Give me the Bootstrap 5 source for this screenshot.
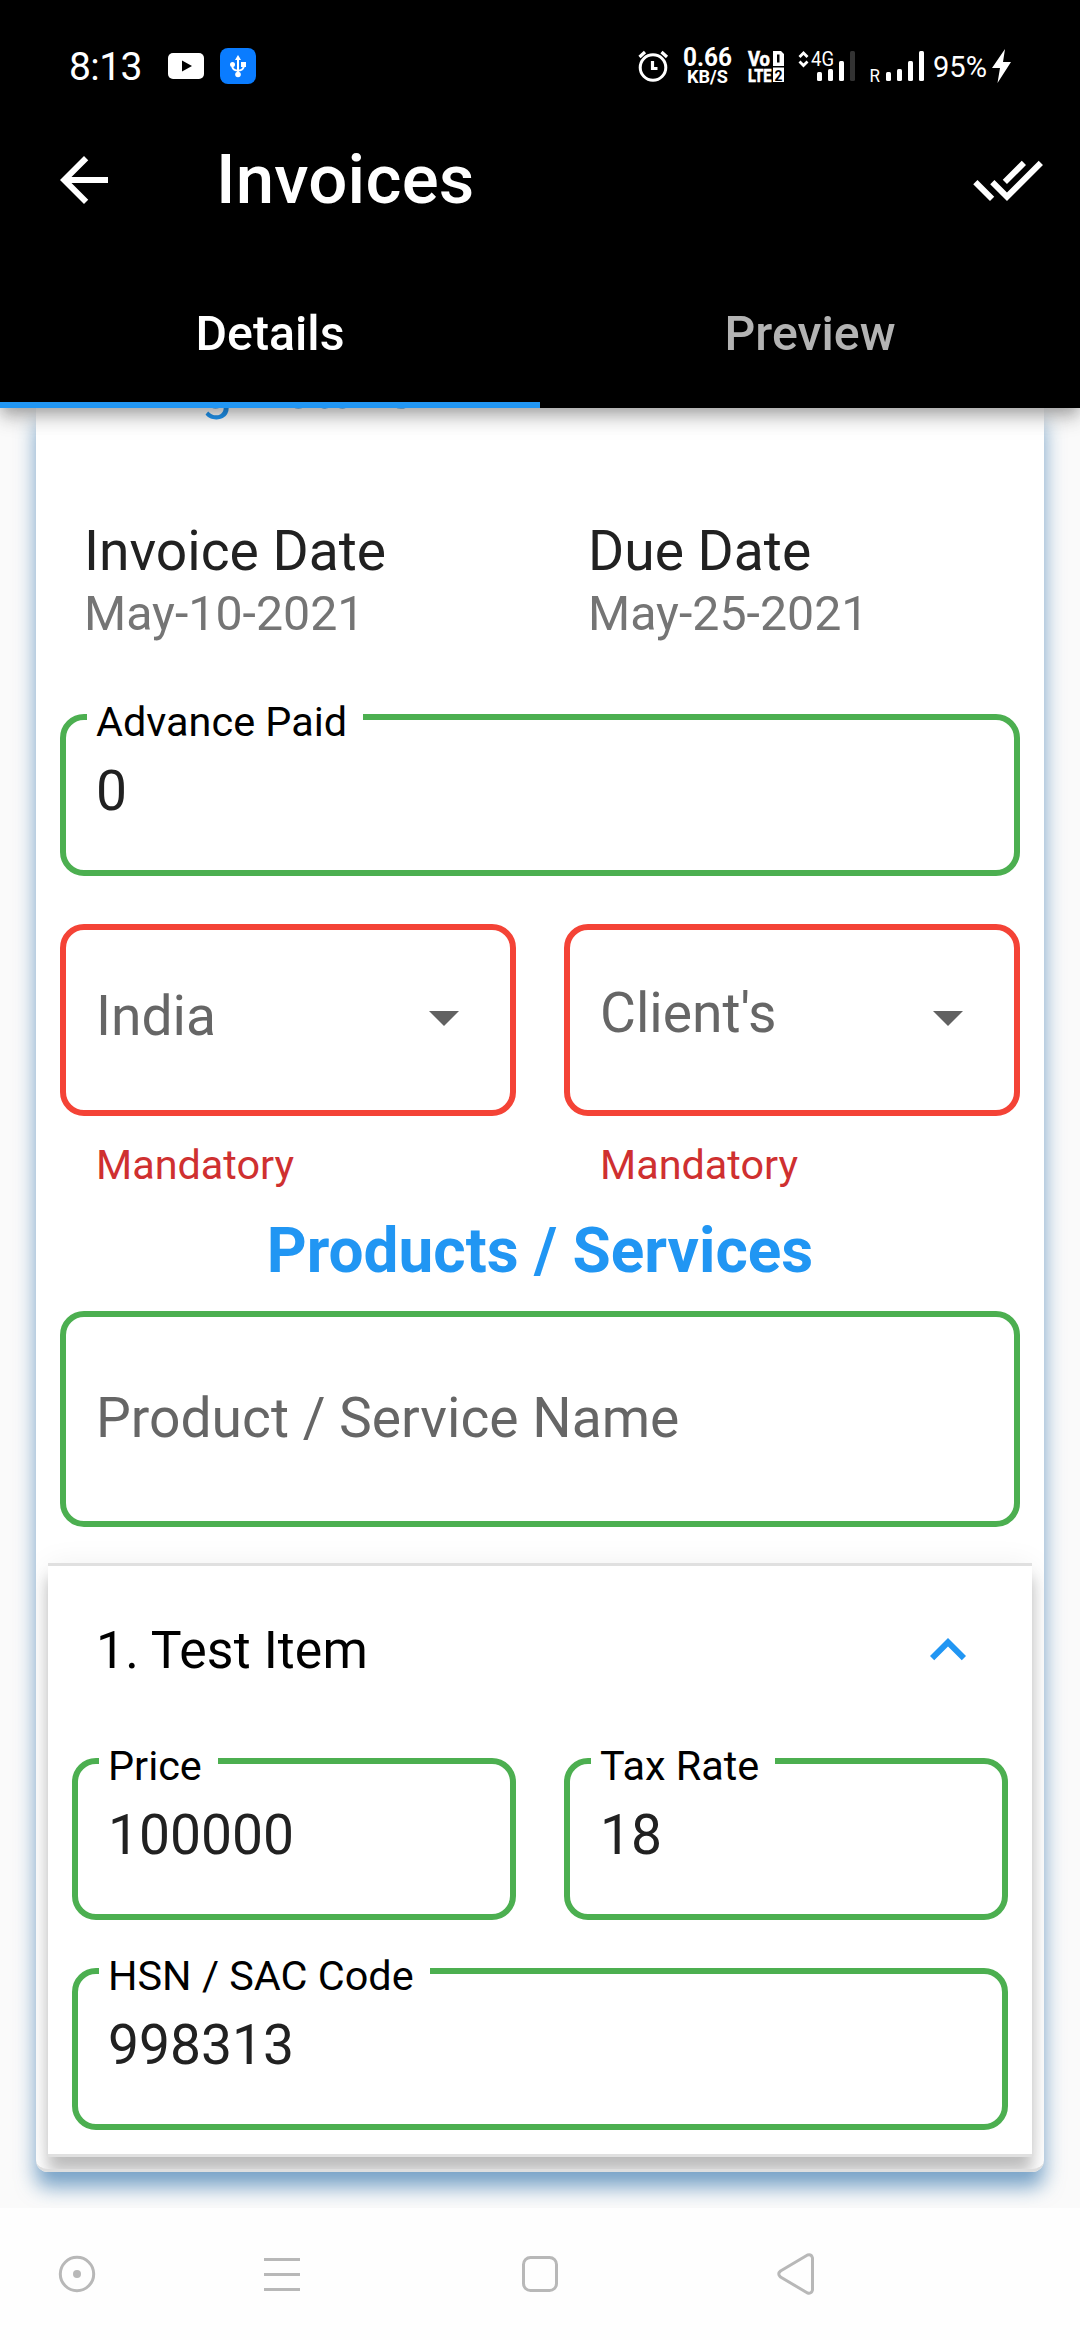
<!DOCTYPE html>
<html lang="en">
<head>
<meta charset="utf-8">
<title>Invoices</title>
<link href="https://cdn.jsdelivr.net/npm/bootstrap@5.3.0/dist/css/bootstrap.min.css" rel="stylesheet">
<style>
  body { width: 1080px; height: 2340px; overflow: hidden; background: #fafafa; font-family: Roboto, "Liberation Sans", sans-serif; color: #212121; }
  svg { display: block; flex: none; overflow: visible; }
  .status-strip { height: 96px; padding: 0 68px 0 69px; }
  .clock { font-size: 39px; line-height: 46px; letter-spacing: -.6px; width: 99px; padding-top: 2px; }
  .app-header { height: 168px; padding: 0 36px 0 48px; }
  .app-title { font-size: 69px; line-height: 84px; font-weight: 500; margin-left: 96px; letter-spacing: .2px; }
  .app-tabs .nav-link { height: 144px; border: 0; border-bottom: 6px solid transparent; border-radius: 0; font-size: 48.3px; font-weight: 500; color: #b3b3b3; padding: 0; line-height: 139px; }
  .app-tabs .nav-link.active { color: #fff; border-color: #2196f3; }
  .top-area { box-shadow: 0 6px 12px -3px rgba(0,0,0,.2), 0 12px 15px rgba(0,0,0,.14), 0 3px 30px rgba(0,0,0,.12); z-index: 2; }
  .scroll-area { height: 1800px; padding: 0 36px; }
  .sheet { height: 1764px; border: 0; border-radius: 0 0 12px 12px; box-shadow: 0 15px 20px rgba(20,95,160,.57); }
  .sheet-inner { border-radius: 0 0 12px 12px; overflow: hidden; height: 100%; border-bottom: 3px solid #dedede; }
  .blue-head { color: #2196f3; }
  .first-head { font-size: 55.2px; line-height: 66px; font-weight: 400; margin: -52px 0 96px 47px; }
  .dates { padding: 0 48px; }
  .date-name { font-size: 55.2px; line-height: 66px; }
  .date-value { font-size: 48.3px; line-height: 57px; padding-top: 1px; color: #757575; }
  .date-cell { width: 504px; }
  .outlined { border: 6px solid #4caf50; border-radius: 24px; height: 162px; padding: 38px 30px 0; font-size: 55.2px; line-height: 66px; background: #fff; }
  .outlined.bad { border-color: #f44336; height: 192px; padding: 0 30px 6px; color: #666; }
  .outlined.tall { height: 216px; padding-top: 68px; color: #666; }
  .float-label { top: -22px; left: 21px; padding: 0 16px 0 9px; background: #fff; color: #000; font-size: 41.4px; line-height: 48px; white-space: nowrap; }
  .advance { margin: 72px 24px 48px; }
  .pickers { margin: 0 24px; gap: 48px; }
  .error-text { color: #cf3030; font-size: 41.4px; line-height: 48px; padding: 25px 0 0 36px; }
  .second-head { font-size: 62.1px; line-height: 74px; font-weight: 700; margin: 25px 0 23px; }
  .item-panel { margin: 36px 12px 0; height: 594px; background: #fff; border-top: 3px solid #e0e0e0; border-bottom: 3px solid #e0e0e0; box-shadow: 0 15px 14px rgba(0,0,0,.23), 0 3px 30px rgba(0,0,0,.07); }
  .item-head { height: 144px; margin-top: 12px; padding: 0 48px; font-size: 51.75px; line-height: 62px; color: #000; letter-spacing: .1px; }
  .item-head span { padding-top: 2px; }
  .country { padding-bottom: 2px; }
  .item-body { padding: 36px 24px 0; gap: 48px; }
  .sys-nav { height: 132px; background: #fefefe; padding-left: 58px; }
</style>
</head>
<body class="d-flex flex-column">
<header class="top-area bg-black text-white position-relative">
  <div class="status-strip d-flex align-items-start">
    <div class="d-flex align-items-center" style="height:132px">
      <div class="clock">8:13</div>
      <svg width="36" height="26" viewBox="0 0 36 26"><rect width="36" height="26" rx="5" fill="#fff"/><path d="M14 7.5l10 5.5-10 5.5z" fill="#000"/></svg>
      <svg class="ms-3" width="36" height="36" viewBox="0 0 36 36"><rect width="36" height="36" rx="8" fill="#0a7cff"/><g fill="none" stroke="#fff" stroke-width="2"><path d="M18 10v17M12.500 17v2.500q1 3 5.500 3t5.500-3V17"/></g><path d="M18 7l3 5h-6z" fill="#fff"/><circle cx="12.500" cy="16.500" r="2.500" fill="#fff"/><rect x="21" y="14" width="5" height="5" fill="#fff"/><circle cx="18" cy="26.500" r="2.800" fill="#fff"/></svg>
    </div>
    <svg class="ms-auto" width="376" height="96" viewBox="636 0 376 96" fill="#fff" font-family="Roboto, sans-serif">
      <g fill="none" stroke="#fff" stroke-width="3"><circle cx="653" cy="67.500" r="12.800"/><path d="M652.500 61v7.500h5M639.500 57l5.500-5M667 57l-5.500-5" stroke-width="3.200"/></g>
      <text x="683" y="66" font-size="25" font-weight="700" textLength="49" lengthAdjust="spacingAndGlyphs">0.66</text>
      <text x="687" y="83" font-size="18" font-weight="700" textLength="41" lengthAdjust="spacingAndGlyphs">KB/S</text>
      <g stroke="#fff" stroke-width=".6">
        <text x="748" y="65.500" font-size="20" font-weight="700" textLength="22" lengthAdjust="spacingAndGlyphs">Vo</text>
        <text x="748" y="82" font-size="19" font-weight="700" textLength="23.500" lengthAdjust="spacingAndGlyphs">LTE</text>
      </g>
      <path fill-rule="evenodd" d="M773 51h8l3 3v12h-11zM777 54.500v8h2.500v-8z"/><rect x="773" y="67.500" width="11" height="14.500"/>
      <text x="774.500" y="80.500" font-size="15" font-weight="700" fill="#000" textLength="8" lengthAdjust="spacingAndGlyphs">2</text>
      <path d="M799.500 57l4-4 4 4M799.500 61.500l4 4 4-4" fill="none" stroke="#fff" stroke-width="2.800"/>
      <text x="811" y="66" font-size="20.500" textLength="23" lengthAdjust="spacingAndGlyphs">4G</text>
      <rect x="817" y="72" width="5" height="9" rx="1.500"/><rect x="828" y="69" width="5" height="12" rx="1.500"/><rect x="839" y="61" width="5" height="20" rx="1.500"/><rect x="850" y="51" width="5" height="30" rx="1.500" fill="#333"/>
      <text x="869.500" y="82" font-size="17.500" textLength="10.500" lengthAdjust="spacingAndGlyphs">R</text>
      <rect x="886" y="72" width="5" height="9" rx="1.500"/><rect x="897" y="69" width="5" height="12" rx="1.500"/><rect x="908" y="61" width="5" height="20" rx="1.500"/><rect x="919" y="51" width="5" height="30" rx="1.500"/>
      <text x="933" y="77" font-size="29" textLength="54" lengthAdjust="spacingAndGlyphs">95%</text>
      <path d="M1005 49l-13 19h8l-2.500 15L1011 62h-8z"/>
    </svg>
  </div>
  <div class="app-header d-flex align-items-center">
    <svg width="72" height="72" viewBox="0 0 24 24" fill="#fff"><path d="M20 11H7.830l5.590-5.590L12 4l-8 8 8 8 1.410-1.410L7.830 13H20v-2z"/></svg>
    <div class="app-title">Invoices</div>
    <svg class="ms-auto" width="72" height="72" viewBox="0 0 24 24" fill="#fff"><path d="M18 7l-1.410-1.410-6.340 6.340 1.410 1.410L18 7zm4.240-1.410L11.660 16.170 7.480 12l-1.410 1.410L11.660 19l12-12-1.420-1.410zM.41 13.410L6 19l1.410-1.410L1.830 12 .41 13.410z"/></svg>
  </div>
  <nav class="app-tabs nav nav-fill">
    <a class="nav-link col-6 active">Details</a>
    <a class="nav-link col-6">Preview</a>
  </nav>
</header>

<main class="scroll-area overflow-hidden">
  <div class="sheet card">
    <div class="sheet-inner">
      <div class="d-flex flex-column">
        <div class="blue-head first-head">Billing Details</div>
        <div class="dates d-flex">
          <div class="date-cell"><div class="date-name">Invoice Date</div><div class="date-value">May-10-2021</div></div>
          <div><div class="date-name">Due Date</div><div class="date-value">May-25-2021</div></div>
        </div>
        <div class="advance outlined position-relative"><label class="float-label position-absolute">Advance Paid</label>0</div>
        <div class="pickers d-flex">
          <div class="flex-fill w-50">
            <div class="outlined bad d-flex align-items-center justify-content-between"><span class="country">India</span>
              <svg width="72" height="72" viewBox="0 0 24 24" fill="#616161"><path d="M7 10l5 5 5-5z"/></svg></div>
            <div class="error-text">Mandatory</div>
          </div>
          <div class="flex-fill w-50">
            <div class="outlined bad d-flex align-items-center justify-content-between"><span class="pb-2">Client's</span>
              <svg width="72" height="72" viewBox="0 0 24 24" fill="#616161"><path d="M7 10l5 5 5-5z"/></svg></div>
            <div class="error-text">Mandatory</div>
          </div>
        </div>
        <div class="blue-head second-head text-center">Products / Services</div>
        <div class="outlined tall mx-4">Product / Service Name</div>
        <section class="item-panel">
          <div class="item-head d-flex align-items-center justify-content-between"><span>1. Test Item</span>
            <svg width="72" height="72" viewBox="0 0 24 24" fill="#2196f3"><path d="M12 8l-6 6 1.410 1.410L12 10.830l4.590 4.580L18 14z"/></svg></div>
          <div class="item-body d-flex flex-wrap">
            <div class="outlined position-relative flex-fill" style="width:440px"><label class="float-label position-absolute">Price</label>100000</div>
            <div class="outlined position-relative flex-fill" style="width:440px"><label class="float-label position-absolute">Tax Rate</label>18</div>
            <div class="outlined position-relative w-100"><label class="float-label position-absolute">HSN / SAC Code</label>998313</div>
          </div>
        </section>
      </div>
    </div>
  </div>
</main>

<footer class="sys-nav d-flex align-items-center position-relative">
  <svg width="760" height="42" viewBox="58 2253 760 42" fill="none" stroke="#b8b8b8" stroke-width="3">
    <circle cx="77" cy="2274" r="16.700"/><circle cx="77" cy="2274" r="4" fill="#b8b8b8" stroke="none"/>
    <path d="M264 2259.500h36M264 2274.500h36M264 2289.500h36"/>
    <rect x="523.500" y="2257.500" width="33" height="33" rx="7"/>
    <path d="M812.500 2258v32q-1 4-5 3l-27-16q-3.500-3 0-6l27-16q4-1 5 3z" stroke-linejoin="round"/>
  </svg>
</footer>
<script src="https://cdn.jsdelivr.net/npm/bootstrap@5.3.0/dist/js/bootstrap.bundle.min.js"></script>
</body>
</html>
